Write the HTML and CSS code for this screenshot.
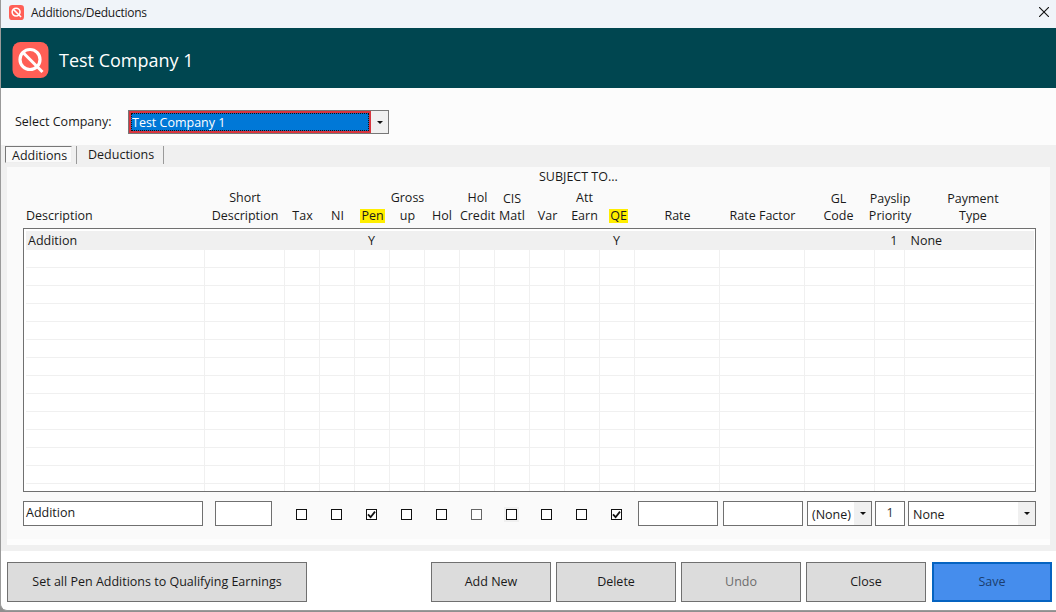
FILE: index.html
```html
<!DOCTYPE html>
<html lang="en">
<head>
<meta charset="utf-8">
<title>Additions/Deductions</title>
<link rel="stylesheet" href="styles.css">
</head>
<body>
<div class="window">
  <div class="titlebar">
    <svg class="logo-small" viewBox="0 0 36 36"><rect width="36" height="36" rx="8" fill="#ff5f56"/><circle cx="17" cy="17" r="9.5" fill="none" stroke="#fff" stroke-width="3.6"/><path d="M10.5 10.5 L29 29" stroke="#fff" stroke-width="3.6"/></svg>
    <span class="title-text">Additions/Deductions</span>
    <svg class="close" viewBox="0 0 10 10"><path d="M0 0 L10 10 M10 0 L0 10" stroke="#111" stroke-width="1.1" fill="none"/></svg>
  </div>
  <header class="banner">
    <svg class="logo" viewBox="0 0 36 36"><rect width="36" height="36" rx="8" fill="#ff5f56"/><circle cx="17.5" cy="17.5" r="10" fill="none" stroke="#fff" stroke-width="3.2"/><path d="M10.5 10.5 L30 30" stroke="#fff" stroke-width="3"/></svg>
    <span class="banner-title">Test Company 1</span>
  </header>
  <div class="company-row">
    <label class="company-label">Select Company:</label>
    <div class="company-select">
      <div class="company-value"><span class="company-focus">Test Company 1</span></div>
      <div class="arrow-box"><i class="arrow"></i></div>
    </div>
  </div>
  <div class="tabs">
    <span class="tab tab-active">Additions</span>
    <span class="tab">Deductions</span>
  </div>
  <main class="tab-page">
    <div class="panel">
      <div class="subject">SUBJECT TO...</div>
      <div class="cols col-heads">
        <div class="head head-left"><span>Description</span></div>
        <div class="head"><span>Short</span><span>Description</span></div>
        <div class="head"><span>Tax</span></div>
        <div class="head"><span>NI</span></div>
        <div class="head"><span class="mark">Pen</span></div>
        <div class="head"><span>Gross</span><span>up</span></div>
        <div class="head head-hol"><span>Hol</span></div>
        <div class="head"><span>Hol</span><span>Credit</span></div>
        <div class="head head-low head-hol"><span>CIS</span><span>Matl</span></div>
        <div class="head"><span>Var</span></div>
        <div class="head head-att"><span>Att</span><span>Earn</span></div>
        <div class="head head-qe"><span class="mark">QE</span></div>
        <div class="head"><span>Rate</span></div>
        <div class="head"><span>Rate Factor</span></div>
        <div class="head head-low head-gl"><span>GL</span><span>Code</span></div>
        <div class="head head-low"><span>Payslip</span><span>Priority</span></div>
        <div class="head head-low head-pay"><span>Payment</span><span>Type</span></div>
      </div>
      <div class="grid-wrap">
        <table class="grid">
          <colgroup>
            <col class="c1"><col class="c2"><col class="c3"><col class="c3"><col class="c3"><col class="c3"><col class="c3"><col class="c3"><col class="c3"><col class="c3"><col class="c3"><col class="c3"><col class="c4"><col class="c4"><col class="c5"><col class="c6"><col class="c7">
          </colgroup>
          <tr class="selected"><td class="desc">Addition</td><td></td><td></td><td></td><td class="mid">Y</td><td></td><td></td><td></td><td></td><td></td><td></td><td class="mid">Y</td><td></td><td></td><td></td><td class="num">1</td><td class="type">None</td></tr>
          <tr><td></td><td></td><td></td><td></td><td></td><td></td><td></td><td></td><td></td><td></td><td></td><td></td><td></td><td></td><td></td><td></td><td></td></tr>
          <tr><td></td><td></td><td></td><td></td><td></td><td></td><td></td><td></td><td></td><td></td><td></td><td></td><td></td><td></td><td></td><td></td><td></td></tr>
          <tr><td></td><td></td><td></td><td></td><td></td><td></td><td></td><td></td><td></td><td></td><td></td><td></td><td></td><td></td><td></td><td></td><td></td></tr>
          <tr><td></td><td></td><td></td><td></td><td></td><td></td><td></td><td></td><td></td><td></td><td></td><td></td><td></td><td></td><td></td><td></td><td></td></tr>
          <tr><td></td><td></td><td></td><td></td><td></td><td></td><td></td><td></td><td></td><td></td><td></td><td></td><td></td><td></td><td></td><td></td><td></td></tr>
          <tr><td></td><td></td><td></td><td></td><td></td><td></td><td></td><td></td><td></td><td></td><td></td><td></td><td></td><td></td><td></td><td></td><td></td></tr>
          <tr><td></td><td></td><td></td><td></td><td></td><td></td><td></td><td></td><td></td><td></td><td></td><td></td><td></td><td></td><td></td><td></td><td></td></tr>
          <tr><td></td><td></td><td></td><td></td><td></td><td></td><td></td><td></td><td></td><td></td><td></td><td></td><td></td><td></td><td></td><td></td><td></td></tr>
          <tr><td></td><td></td><td></td><td></td><td></td><td></td><td></td><td></td><td></td><td></td><td></td><td></td><td></td><td></td><td></td><td></td><td></td></tr>
          <tr><td></td><td></td><td></td><td></td><td></td><td></td><td></td><td></td><td></td><td></td><td></td><td></td><td></td><td></td><td></td><td></td><td></td></tr>
          <tr><td></td><td></td><td></td><td></td><td></td><td></td><td></td><td></td><td></td><td></td><td></td><td></td><td></td><td></td><td></td><td></td><td></td></tr>
          <tr><td></td><td></td><td></td><td></td><td></td><td></td><td></td><td></td><td></td><td></td><td></td><td></td><td></td><td></td><td></td><td></td><td></td></tr>
          <tr><td></td><td></td><td></td><td></td><td></td><td></td><td></td><td></td><td></td><td></td><td></td><td></td><td></td><td></td><td></td><td></td><td></td></tr>
          <tr class="last"><td></td><td></td><td></td><td></td><td></td><td></td><td></td><td></td><td></td><td></td><td></td><td></td><td></td><td></td><td></td><td></td><td></td></tr>
        </table>
      </div>
      <div class="edit-row">
        <div class="field f-desc">Addition</div>
        <div class="field f-short"></div>
        <div class="checks">
          <span class="cell"><i class="check"></i></span>
          <span class="cell"><i class="check"></i></span>
          <span class="cell"><i class="check"><svg viewBox="0 0 9 9"><path d="M1 4.4 L3.6 7.2 L8 1.6" fill="none" stroke="#111" stroke-width="1.8"/></svg></i></span>
          <span class="cell"><i class="check"></i></span>
          <span class="cell"><i class="check"></i></span>
          <span class="cell"><i class="check check-off"></i></span>
          <span class="cell cell-focus"><i class="check"></i></span>
          <span class="cell"><i class="check"></i></span>
          <span class="cell"><i class="check"></i></span>
          <span class="cell"><i class="check"><svg viewBox="0 0 9 9"><path d="M1 4.4 L3.6 7.2 L8 1.6" fill="none" stroke="#111" stroke-width="1.8"/></svg></i></span>
        </div>
        <div class="field f-rate"></div>
        <div class="field f-factor"></div>
        <div class="field f-combo f-gl"><span class="combo-text">(None)</span><span class="combo-btn"><i class="arrow"></i></span></div>
        <div class="field f-prio">1</div>
        <div class="field f-combo f-type"><span class="combo-text">None</span><span class="combo-btn"><i class="arrow"></i></span></div>
      </div>
    </div>
  </main>
  <footer class="footer">
    <button class="btn btn-wide">Set all Pen Additions to Qualifying Earnings</button>
    <div class="footer-right">
      <button class="btn">Add New</button>
      <button class="btn">Delete</button>
      <button class="btn btn-disabled">Undo</button>
      <button class="btn">Close</button>
      <button class="btn btn-save">Save</button>
    </div>
  </footer>
</div>
</body>
</html>
```
FILE: styles.css
```css
* { box-sizing: border-box; }
html, body { margin: 0; padding: 0; }
body {
  width: 1056px;
  height: 612px;
  overflow: hidden;
  background: #8f8f8f;
  font-family: "Open Sans", "Noto Sans", "Liberation Sans", sans-serif;
  font-size: 12.5px;
  color: #1a1a1a;
}
.window {
  width: 1056px;
  height: 611px;
  background: #fff;
  border-left: 1px solid #9a9a9a;
  border-bottom: 1px solid #9a9a9a;
  border-bottom-left-radius: 7px;
  overflow: hidden;
}
.titlebar {
  height: 28px;
  background: #f0f4f9;
  display: flex;
  align-items: center;
  padding: 0 0 4px 8px;
}
.logo-small { width: 15px; height: 15px; }
.title-text { margin-left: 7px; font-size: 12px; letter-spacing: -0.25px; }
.close { width: 10px; height: 10px; margin-left: auto; margin-right: 7px; }
.banner {
  height: 60px;
  background: #004650;
  display: flex;
  align-items: center;
  padding: 3px 0 0 11px;
}
.logo { width: 37px; height: 36px; }
.banner-title { margin-left: 10px; color: #fff; font-size: 18px; }
.company-row {
  height: 57px;
  background: #fcfcfc;
  display: flex;
  align-items: flex-start;
  padding: 22px 0 0 14px;
}
.company-label { width: 113px; line-height: 24px; }
.company-select {
  width: 261px;
  height: 24px;
  border: 1px solid #777;
  display: flex;
  background: #f0f0f0;
}
.company-value {
  width: 242px;
  background: #0078d7;
  border: 2px solid #d8353f;
  padding: 0;
}
.company-focus {
  display: block;
  height: 100%;
  border: 1px dotted #111;
  color: #fff;
  padding-left: 0;
  line-height: 17px;
}
.arrow-box { flex: 1; display: flex; align-items: center; justify-content: center; }
.arrow {
  display: block;
  width: 0;
  height: 0;
  border-left: 3px solid transparent;
  border-right: 3px solid transparent;
  border-top: 3px solid #111;
}
.tabs {
  height: 22px;
  background: #f0f0f0;
  display: flex;
  padding-left: 4px;
}
.tab {
  height: 18px;
  margin-top: 1px;
  padding: 0 10px 0 12px;
  border-right: 1px solid #9a9a9a;
  line-height: 17px;
}
.tab-active {
  margin-top: 1px;
  height: 17px;
  padding: 0 6px;
  border: 1px solid #777;
  border-right-color: #eee;
  border-bottom-color: #eee;
  background: #fafafa;
  width: 67px;
  margin-right: 4px;
  white-space: nowrap;
}
.tab-active + .tab { border-left: 1px solid #9a9a9a; padding: 0 9px 0 11px; }
.tab-page {
  height: 384px;
  background: #f0f0f0;
  padding: 0 0 6px 6px;
}
.panel {
  width: 1043px;
  height: 378px;
  background: #fafafa;
  border-bottom: 6px solid #fdfdfd;
  padding-left: 16px;
}
.subject {
  height: 21px;
  line-height: 19px;
  padding-left: 516px;
}
.cols {
  display: grid;
  grid-template-columns: 179px 80px repeat(10, 35px) 85px 85px 70px 30px 128px;
  padding-left: 3px;
  width: 1013px;
}
.col-heads { height: 37px; }
.head {
  display: flex;
  flex-direction: column;
  align-items: center;
  justify-content: flex-end;
  line-height: 18px;
  white-space: nowrap;
}
.head-left { align-items: flex-start; }
.head-low span:first-child { margin-bottom: -1px; }
.head-hol { padding-right: 1px; }
.head-att { padding-left: 4px; }
.head-qe { padding-left: 2px; }
.head-pay { padding-left: 8px; }
.head-gl { padding-right: 3px; }
.mark {
  background: #ffee00;
  padding: 0 1px;
  line-height: 14px;
  margin-bottom: 2px;
}
.grid-wrap {
  margin-top: 3px;
  width: 1013px;
  height: 264px;
  border: 1px solid #707070;
  background: #fff;
  padding: 2px 2px 0;
  overflow: hidden;
}
.grid {
  border-collapse: collapse;
  table-layout: fixed;
  width: 1008px;
}
.c1 { width: 178px; }
.c2 { width: 80px; }
.c3 { width: 35px; }
.c4 { width: 85px; }
.c5 { width: 70px; }
.c6 { width: 30px; }
.c7 { width: 130px; }
.grid tr { height: 18px; }
.grid td {
  height: 18px;
  padding: 0;
  border-right: 1px solid #f0f0f0;
  border-bottom: 1px solid #f0f0f0;
  line-height: 17px;
  white-space: nowrap;
}
.grid td:last-child { border-right: 0; }
.grid .selected td { background: #f0f0f0; border-color: #f0f0f0; padding-top: 1px; }
.grid .desc { padding-left: 2px; }
.grid .mid { text-align: center; }
.grid .num { text-align: right; padding-right: 6px; }
.grid .type { padding-left: 6px; }
.edit-row {
  margin-top: 9px;
  width: 1013px;
  height: 25px;
  display: flex;
  align-items: stretch;
}
.field {
  border: 1px solid #707070;
  background: #fff;
  line-height: 22px;
  padding-left: 2px;
}
.f-desc { width: 180px; }
.f-short { width: 57px; margin-left: 12px; }
.checks { display: flex; margin-left: 12px; padding-top: 1px; }
.cell {
  width: 35px;
  display: flex;
  align-items: center;
  justify-content: center;
}
.cell-focus .check { outline: 2px solid #f0f0f0; }
.check {
  display: block;
  width: 11px;
  height: 11px;
  border: 1px solid #111;
  background: #fff;
}
.check svg { display: block; width: 9px; height: 9px; }
.check-off { border-color: #666; }
.f-rate { width: 80px; margin-left: 4px; }
.f-factor { width: 80px; margin-left: 5px; }
.f-combo { display: flex; padding-left: 0; }
.combo-text { flex: 1; padding-left: 4px; line-height: 25px; }
.combo-btn {
  width: 17px;
  background: #f0f0f0;
  display: flex;
  align-items: center;
  justify-content: center;
}
.f-gl { width: 65px; margin-left: 4px; }
.f-prio { width: 30px; margin-left: 3px; padding: 0; text-align: center; color: #333; }
.f-type { width: 128px; margin-left: 3px; }
.footer {
  display: flex;
  justify-content: space-between;
  padding: 11px 4px 0 6px;
}
.footer-right { display: flex; gap: 5px; }
.btn {
  width: 120px;
  height: 40px;
  padding: 0 0 2px;
  font: inherit;
  color: #1a1a1a;
  background: #dcdcdc;
  border: 1px solid #707070;
}
.btn-wide { width: 300px; }
.btn-disabled { color: #6d6d6d; }
.btn-save {
  margin-left: 1px;
  background: #458ded;
  border: 2px solid #0563c1;
  color: #1c3e6e;
}
```
